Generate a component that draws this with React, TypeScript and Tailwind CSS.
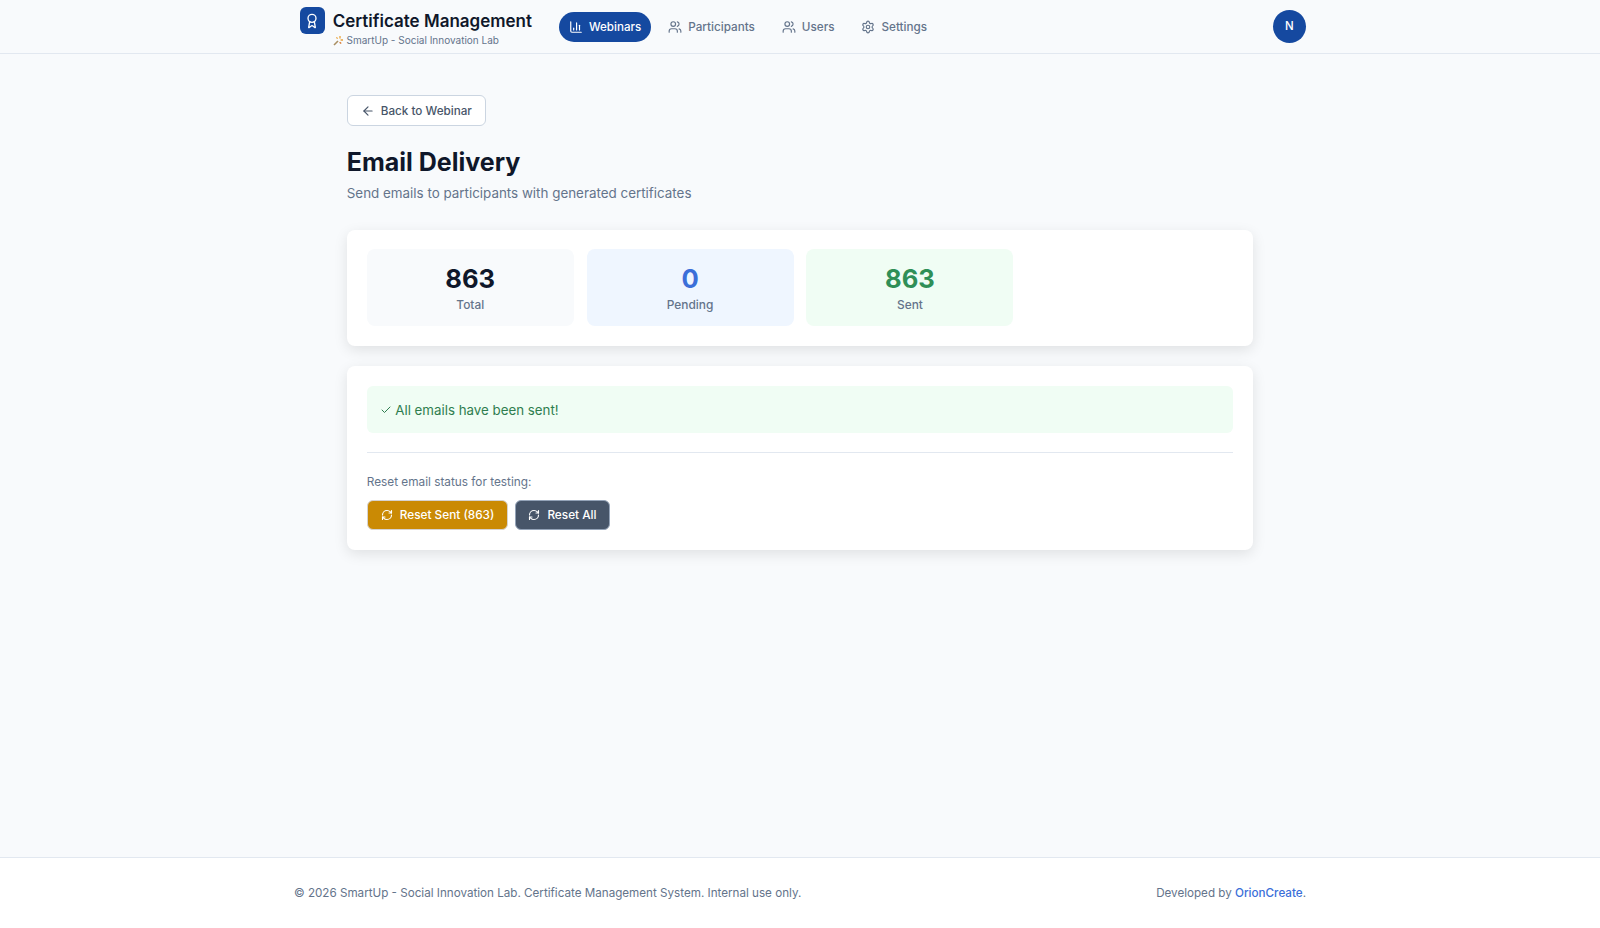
import React from "react";
import { Award, ChartColumn, Users, Settings, ArrowLeft, RefreshCw, Check } from "lucide-react";

const Nav = ({ icon, label, active }: { icon: React.ReactNode; label: string; active?: boolean }) => (
  <a className={active
    ? "flex items-center gap-[6px] h-[30px] px-[10px] rounded-full bg-[#1549a0] text-white text-[11.6px] leading-[18px] font-medium"
    : "flex items-center gap-[6px] h-[30px] px-[10px] rounded-full text-[#64748b] text-[11.7px] leading-[18px] font-medium"}>
    {icon}
    <span>{label}</span>
  </a>
);

const Stat = ({ value, label, bg, color }: { value: string; label: string; bg: string; color: string }) => (
  <div className={`${bg} rounded-lg flex flex-col items-center h-[77px] pt-[14px]`}>
    <div className={`${color} text-[25.6px] leading-[31px] font-bold`}>{value}</div>
    <div className="text-[11.9px] leading-[18px] mt-[2px] font-medium text-[#64748b]">{label}</div>
  </div>
);

export default function App() {
  return (
    <div className="min-h-[928px] flex flex-col bg-[#f8fafc] text-[#0f172a]" style={{ fontFamily: "Inter, sans-serif" }}>
      <header className="h-[54px] border-b border-[#e2e8f0] flex justify-center">
        <div className="w-[1012px] pl-[6px] flex items-center">
          <div className="flex flex-col w-[232px] mr-[27px]">
            <div className="flex items-start gap-[7px] h-[27px]">
              <div className="w-[27px] h-[27px] rounded-md bg-[#1549a0] flex items-center justify-center">
                <Award size={16} className="text-white" />
              </div>
              <span className="text-[17px] font-semibold leading-[27px] whitespace-nowrap mt-[1px] ml-[1px]">Certificate Management</span>
            </div>
            <div className="flex items-center pl-[32.5px] gap-[3px] text-[10px] leading-[12px] text-[#64748b]">
              <svg width="11" height="11" viewBox="0 0 11 11">
                <path d="M1 10 L5 6" stroke="#a98f62" strokeWidth="1.6" />
                <path d="M7 1v2.4M10 5H7.6M3.4 2.4l1.2 1.2" stroke="#e8a33a" strokeWidth="1.3" />
                <path d="M6.6 7.2l1.6 1.4" stroke="#d9772f" strokeWidth="1.3" />
              </svg>
              <span className="whitespace-nowrap">SmartUp - Social Innovation Lab</span>
            </div>
          </div>
          <nav className="flex items-center gap-[7px]">
            <Nav active icon={<ChartColumn size={14} />} label="Webinars" />
            <Nav icon={<Users size={14} />} label="Participants" />
            <Nav icon={<Users size={14} />} label="Users" />
            <Nav icon={<Settings size={14} />} label="Settings" />
          </nav>
          <div className="ml-auto w-[33.5px] h-[33.5px] rounded-full bg-[#1549a0] text-white text-[11.5px] font-medium flex items-center justify-center">N</div>
        </div>
      </header>

      <main className="flex-1 w-[906.5px] mx-auto pt-[41px]">
        <button className="flex items-center gap-[6px] h-[31px] px-[13px] bg-white border border-[#cbd5e1] rounded-md text-[11.7px] leading-[18px] font-medium text-[#475569]">
          <ArrowLeft size={14} />
          Back to Webinar
        </button>
        <h1 className="text-[25px] leading-[32px] font-bold mt-[20px]">Email Delivery</h1>
        <p className="text-[13.4px] leading-[20px] mt-[5px] text-[#64748b]">Send emails to participants with generated certificates</p>

        <section className="mt-[27px] bg-white rounded-lg shadow-[0_4px_14px_rgba(0,0,0,0.1)] pt-[19px] px-[20px] pb-[20px] grid grid-cols-4 gap-[12.8px]">
          <Stat value="863" label="Total" bg="bg-[#f8fafc]" color="text-[#0f172a]" />
          <Stat value="0" label="Pending" bg="bg-[#eff6ff]" color="text-[#3b6fd9]" />
          <Stat value="863" label="Sent" bg="bg-[#f0fdf4]" color="text-[#2f8f57]" />
        </section>

        <section className="mt-[20px] bg-white rounded-lg shadow-[0_4px_14px_rgba(0,0,0,0.1)] p-[20px]">
          <div className="h-[47px] rounded-md bg-[#f0fdf4] text-[#2f7d4f] flex items-center px-[13.5px] gap-[3px] text-[13.3px] leading-[22px]">
            <Check size={12} />
            All emails have been sent!
          </div>
          <hr className="mt-[19px] border-[#e2e8f0]" />
          <p className="mt-[20px] text-[11.8px] leading-[18px] text-[#64748b]">Reset email status for testing:</p>
          <div className="mt-[9px] flex gap-[7px]">
            <button className="flex items-center gap-[7px] h-[30px] px-[13px] rounded-md bg-[#ca8a04] border border-[#d6d3d1] text-white text-[11.8px] leading-[19px] font-medium">
              <RefreshCw size={12} strokeWidth={2.25} />
              Reset Sent (863)
            </button>
            <button className="flex items-center gap-[7px] h-[30px] px-[12px] rounded-md bg-[#475569] border border-[#94a3b8] text-white text-[11.8px] leading-[19px] font-medium">
              <RefreshCw size={12} strokeWidth={2.25} />
              Reset All
            </button>
          </div>
        </section>
      </main>

      <footer className="h-[71px] bg-white border-t border-[#e2e8f0] flex justify-center">
        <div className="w-[1012px] flex items-center justify-between text-[11.65px] leading-[19px] text-[#64748b]">
          <span>© 2026 SmartUp - Social Innovation Lab. Certificate Management System. Internal use only.</span>
          <span>Developed by <a className="text-[#3b6fd9] font-medium">OrionCreate</a>.</span>
        </div>
      </footer>
    </div>
  );
}
